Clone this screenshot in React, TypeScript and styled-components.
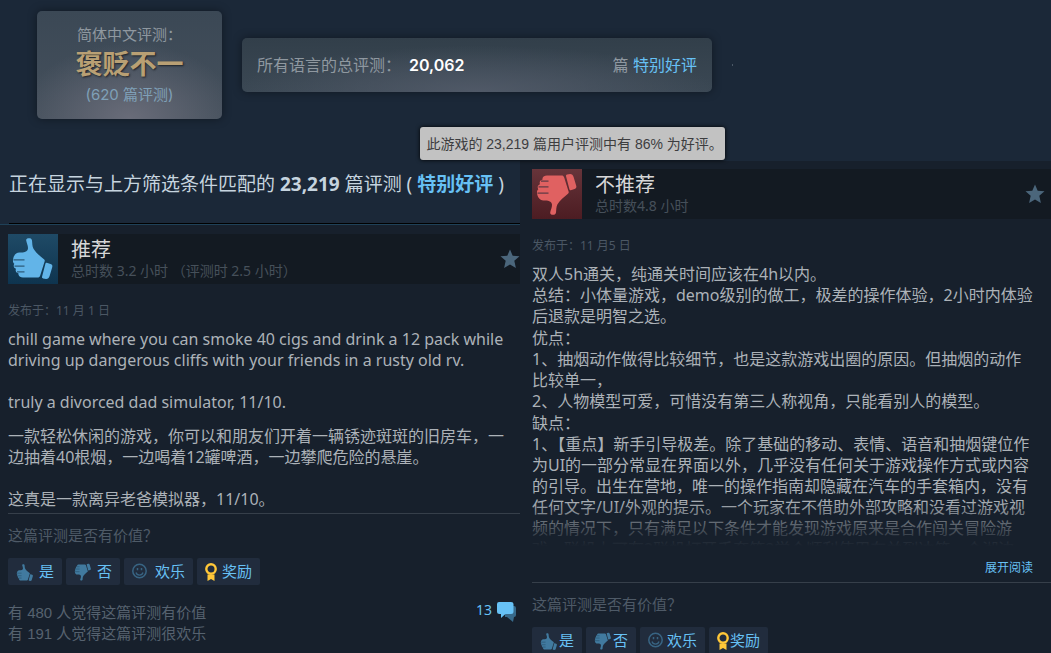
import React from "react";
import styled, { createGlobalStyle, css } from "styled-components";

const sans = `"Noto Sans", "Noto Sans CJK SC", sans-serif`;
const wide = `Inter, "Noto Sans CJK SC", sans-serif`;
const plain = `"Liberation Sans", "Noto Sans CJK SC", sans-serif`;

const Global = createGlobalStyle`
  * { box-sizing: border-box; }
  body { margin: 0; background: #17202c; font-family: ${sans}; color: #acb2b8; }
  p, h1, h2 { margin: 0; font-weight: 400; }
  a { color: #67c1f5; text-decoration: none; }
`;

const Page = styled.main`
  display: flex;
  flex-direction: column;
  height: 100vh;
  overflow: hidden;
`;

const Top = styled.header`
  position: relative;
  display: flex;
  align-items: flex-start;
  gap: 20px;
  padding: 11px 36px 42px 37px;
  background: #1b2838;
`;

const panel = css`
  border-radius: 5px;
  box-shadow: 0 0 10px rgba(0, 0, 0, 0.4);
`;

const ScoreCard = styled.section`
  ${panel}
  flex: 0 1 185px;
  height: 108px;
  padding-top: 14px;
  text-align: center;
  font: 15px/20px ${wide};
  color: #8f98a0;
  background: radial-gradient(ellipse 110px 76px at 50% 100%, #696c79, rgba(105, 108, 121, 0) 100%),
    linear-gradient(#3b4855, #45505c);
`;

const Verdict = styled.h1`
  font: bold 27px/38px ${sans};
  color: #b9a074;
  text-shadow: 1px 1px 2px rgba(0, 0, 0, 0.6);
`;

const ScoreCount = styled.p`
  padding-top: 2px;
  color: #7fa0b8;
`;

const TotalBar = styled.section`
  ${panel}
  flex: 0 1 470px;
  display: flex;
  align-items: center;
  height: 54px;
  margin-top: 27px;
  padding: 0 15px;
  font: 16px/24px ${wide};
  color: #8f98a0;
  background: radial-gradient(ellipse 240px 46px at 50% 100%, #505967, rgba(80, 89, 103, 0) 100%),
    linear-gradient(#323f4a, #3b4854);
`;

const TotalNumber = styled.strong`
  flex: 1;
  padding-left: 8px;
  font-weight: 600;
  color: #fff;
`;

const Speck = styled.i`
  width: 1px;
  height: 2px;
  margin-top: 53px;
  background: #4b5866;
`;

const Tooltip = styled.div`
  position: absolute;
  left: 40%;
  top: 127px;
  z-index: 2;
  height: 33px;
  padding: 0 2px 0 6px;
  border-radius: 3px;
  background: #c2c2c2;
  box-shadow: 0 0 4px #000;
  font: 14px/35px ${plain};
  color: #3d3d3f;
  white-space: nowrap;
`;

const Columns = styled.div`
  flex: 1;
  display: grid;
  grid-template-columns: 520fr 531fr;
  min-height: 0;
`;

const Column = styled.section`
  display: flex;
  flex-direction: column;
  min-width: 0;
`;

const FilterSummary = styled.header`
  height: 64px;
  padding: 9px 0 0 9px;
  background: #1b2838;
  border-bottom: 1px solid #1f4158;
  font-size: 19px;
  line-height: 28px;
  color: #c6d4df;
  white-space: nowrap;

  &::after {
    content: "";
    display: block;
    margin-top: 25px;
    border-top: 1px solid #000;
  }
`;

const Review = styled.article<{ $side: "left" | "right" }>`
  padding: ${(p) => (p.$side === "left" ? "9px 0 0 8px" : "8px 0 0 12px")};
`;

const ReviewHead = styled.header`
  display: flex;
  align-items: center;
  height: 50px;
  background: #131a22;
`;

const ThumbBox = styled.span<{ $down?: boolean }>`
  width: 50px;
  height: 50px;
  color: ${(p) => (p.$down ? "#e06161" : "#62b4e8")};
  background: ${(p) => (p.$down ? "linear-gradient(#66343a, #4c1c22)" : "linear-gradient(#1f4a66, #0e344f)")};
`;

const HeadText = styled.div`
  flex: 1;
  padding: 0 0 2px 13px;
`;

const ReviewTitle = styled.h2`
  font-size: 20px;
  line-height: 26px;
  color: #d6d7d8;
`;

const Hours = styled.p`
  font-size: 14px;
  line-height: 16px;
  color: #46505a;
`;

const Star = styled.svg<{ $inset?: boolean }>`
  width: 20px;
  height: 20px;
  margin-right: ${(p) => (p.$inset ? 6 : 0)}px;
`;

const Posted = styled.p`
  padding-top: 18px;
  font-size: 12px;
  line-height: 18px;
  color: #4b5764;
`;

const Body = styled.div<{ $gap: number }>`
  display: flex;
  flex-direction: column;
  gap: ${(p) => p.$gap}px;
  padding: 9px 6px 0 0;
  font-size: 16px;
  line-height: 21px;
  white-space: pre-line;
`;

const Clipped = styled(Body)`
  position: relative;
  height: 291px;
  padding-right: 16px;
  overflow: hidden;

  &::after {
    content: "";
    position: absolute;
    inset: auto 0 0;
    height: 46px;
    background: linear-gradient(rgba(23, 32, 44, 0), #17202c);
  }
`;

const Expand = styled.a`
  display: block;
  padding: 12px 18px 4px 0;
  text-align: right;
  font-size: 12px;
  line-height: 20px;
`;

const Feedback = styled.footer<{ $top: number }>`
  margin-top: ${(p) => p.$top}px;
  border-top: 1px solid #363f4a;
`;

const Question = styled.p`
  padding: 11px 0 12px;
  font-size: 15px;
  line-height: 21px;
  color: #4e5a67;
`;

const Votes = styled.div`
  display: flex;
  gap: 4px;
`;

const Vote = styled.button<{ $roomy: boolean }>`
  display: flex;
  align-items: center;
  gap: ${(p) => (p.$roomy ? 5 : 1)}px;
  height: 27px;
  padding: 0 8px;
  border: 0;
  border-radius: 2px;
  background: #212c3d;
  font: 15px/27px ${sans};
  color: #67c1f5;
  white-space: nowrap;
`;

const Tallies = styled.div`
  display: flex;
  justify-content: space-between;
  padding: 17px 4px 0 0;
  font: 15px/21px ${plain};
  color: #56626f;
`;

const Comments = styled.a`
  display: flex;
  align-items: flex-start;
  gap: 5px;
  font-family: ${sans};
  font-size: 14px;
  line-height: 16px;
`;

type ThumbProps = { size: number; box?: string; down?: boolean; fill?: string };

const ThumbShape = ({ size, box = "0 0 50 50", down = false, fill = "currentColor" }: ThumbProps) => (
  <svg width={size} height={size} viewBox={box} display="block" aria-hidden="true">
    <g transform={down ? "translate(0 50) scale(1 -1)" : undefined}>
      <g fill={fill}>
        <path d="M18.200 6.500C18 4.800 19.200 4.200 21 4.200c1.800 0 2.700.6 3 2.300.4 3.200.1 5.600 1.500 8.300 2.200 3.800 6.500 7.200 10.700 10.800.6.600.7 1 .4 1.900L32.200 41.500c-.5 1.500-1.200 2.100-2.700 2.100H15c-2.600 0-3.800-.9-4.400-2.500-.2-.7-.2-1.100 0-1.700-1.700-.4-2.600-1.300-2.900-2.700-.1-.8 0-1.300.3-1.900-1.500-.5-2.300-1.500-2.300-3 0-.9.2-1.400.6-2-1.100-.9-1.500-2.200-1.300-3.900.4-3.900 2.400-7.300 6.500-7.300 4.300 0 8.300-.4 8.500-4.300.1-2.700-1.400-5.200-1.800-7.800z" />
        <path d="M38.700 28.700l3.900 1.300c1.500.5 2 1.400 1.700 2.900l-2.700 9.200c-.6 1.900-1.600 2.900-3.500 2.900l-3-.6c-1-.3-1.300-.9-1-1.900l3.300-12.700c.2-.9.6-1.300 1.300-1.100z" />
      </g>
      <path d="M5.500 25.800h11M6.500 32.200h10M9 37.800h7.500" stroke="#0c2234" strokeOpacity=".6" strokeWidth="1.200" fill="none" />
    </g>
  </svg>
);

const StarIcon = ({ inset = false }: { inset?: boolean }) => (
  <Star $inset={inset} viewBox="0 0 20 20" aria-hidden="true">
    <path d="M10 .5l2.700 6.200 6.800.6-5.200 4.500 1.600 7.200L10 15.500 4.100 19l1.600-7.200L.5 7.300l6.800-.6z" fill="#4b667b" />
  </Star>
);

const Smile = () => (
  <svg width="18" height="18" viewBox="0 0 18 18" fill="none" stroke="#386483" aria-hidden="true">
    <circle cx="7.500" cy="8" r="6.700" strokeWidth="1.500" />
    <path d="M4 9.500c.8 3.400 6.200 3.400 7 0" strokeWidth="1.200" />
    <path d="M5.500 5v2.200M9.500 5v2.200" strokeWidth="1.500" />
  </svg>
);

const Medal = () => (
  <svg width="12" height="20" viewBox="0 0 12 20" aria-hidden="true">
    <circle cx="6" cy="7" r="4.700" fill="none" stroke="#ffc738" strokeWidth="2.400" />
    <path d="M2.500 12.500h7V19L6 17l-3.500 2z" fill="#ffc738" />
  </svg>
);

const Bubbles = () => (
  <svg width="19" height="20" viewBox="0 0 19 20" aria-hidden="true">
    <path d="M8 4h9q2 0 2 2v7q0 2-2 2l-1 5-6-5H8z" fill="#386a8b" />
    <path d="M2 0h12q2.500 0 2.500 2v7.500q0 2.500-2.500 2.500H8.500L4 16v-4H2.500Q0 12 0 9.500V2q0-2 2-2z" fill="#67c1f5" />
  </svg>
);

const VoteBar = ({ roomy = false }: { roomy?: boolean }) => (
  <Votes>
    <Vote $roomy={roomy}><ThumbShape size={18} box="4 1 42 44" fill="#417a9f" />是</Vote>
    <Vote $roomy={roomy}><ThumbShape size={18} box="4 3 42 44" down fill="#417a9f" />否</Vote>
    <Vote $roomy={roomy}><Smile />欢乐</Vote>
    <Vote $roomy={roomy}><Medal />奖励</Vote>
  </Votes>
);

export default function App() {
  return (
    <>
      <Global />
      <Page>
        <Top>
          <ScoreCard>
            <p>简体中文评测：</p>
            <Verdict>褒贬不一</Verdict>
            <ScoreCount>(620 篇评测)</ScoreCount>
          </ScoreCard>
          <TotalBar>
            <span>所有语言的总评测：</span>
            <TotalNumber>20,062</TotalNumber>
            <span>篇&nbsp;<a href="#all">特别好评</a></span>
          </TotalBar>
          <Speck />
          <Tooltip role="tooltip">此游戏的 23,219 篇用户评测中有 86% 为好评。</Tooltip>
        </Top>
        <Columns>
          <Column>
            <FilterSummary>
              正在显示与上方筛选条件匹配的 <b>23,219</b> 篇评测 ( <a href="#matching"><b>特别好评</b></a> )
            </FilterSummary>
            <Review $side="left">
              <ReviewHead>
                <ThumbBox><ThumbShape size={50} /></ThumbBox>
                <HeadText>
                  <ReviewTitle>推荐</ReviewTitle>
                  <Hours>总时数 3.2 小时 （评测时 2.5 小时）</Hours>
                </HeadText>
                <StarIcon />
              </ReviewHead>
              <Posted>发布于：11 月 1 日</Posted>
              <Body $gap={13}>
                <p>{"chill game where you can smoke 40 cigs and drink a 12 pack while driving up dangerous cliffs with your friends in a rusty old rv.\n\ntruly a divorced dad simulator, 11/10."}</p>
                <p>{"一款轻松休闲的游戏，你可以和朋友们开着一辆锈迹斑斑的旧房车，一边抽着40根烟，一边喝着12罐啤酒，一边攀爬危险的悬崖。\n\n这真是一款离异老爸模拟器，11/10。"}</p>
              </Body>
              <Feedback $top={3}>
                <Question>这篇评测是否有价值？</Question>
                <VoteBar roomy />
                <Tallies>
                  <div>
                    <p>有 480 人觉得这篇评测有价值</p>
                    <p>有 191 人觉得这篇评测很欢乐</p>
                  </div>
                  <Comments href="#comments">13 <Bubbles /></Comments>
                </Tallies>
              </Feedback>
            </Review>
          </Column>
          <Column>
            <Review $side="right">
              <ReviewHead>
                <ThumbBox $down><ThumbShape size={50} down /></ThumbBox>
                <HeadText>
                  <ReviewTitle>不推荐</ReviewTitle>
                  <Hours>总时数4.8 小时</Hours>
                </HeadText>
                <StarIcon inset />
              </ReviewHead>
              <Posted>发布于：11 月5 日</Posted>
              <Clipped $gap={1}>
                <p>{"双人5h通关，纯通关时间应该在4h以内。\n总结：小体量游戏，demo级别的做工，极差的操作体验，2小时内体验后退款是明智之选。"}</p>
                <p>{"优点：\n1、抽烟动作做得比较细节，也是这款游戏出圈的原因。但抽烟的动作比较单一，\n2、人物模型可爱，可惜没有第三人称视角，只能看别人的模型。"}</p>
                <p>{"缺点：\n1、【重点】新手引导极差。除了基础的移动、表情、语音和抽烟键位作为UI的一部分常显在界面以外，几乎没有任何关于游戏操作方式或内容的引导。出生在营地，唯一的操作指南却隐藏在汽车的手套箱内，没有任何文字/UI/外观的提示。一个玩家在不借助外部攻略和没看过游戏视频的情况下，只有满足以下条件才能发现游戏原来是合作闯关冒险游戏，联机上可有2联机打开手套箱3学会顺利使用车并到达第一个湖边"}</p>
              </Clipped>
              <Expand href="#more">展开阅读</Expand>
              <Feedback $top={0}>
                <Question>这篇评测是否有价值？</Question>
                <VoteBar />
              </Feedback>
            </Review>
          </Column>
        </Columns>
      </Page>
    </>
  );
}
